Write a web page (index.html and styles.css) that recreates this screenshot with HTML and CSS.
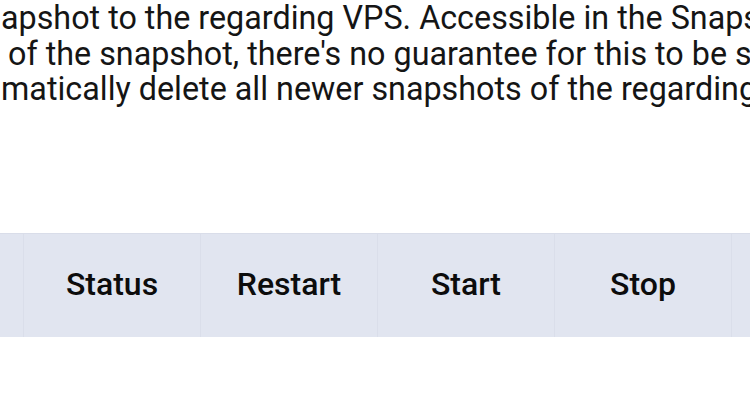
FILE: index.html
```html
<!DOCTYPE html>
<html lang="en">
<head>
  <meta charset="UTF-8">
  <title>Snapshots</title>
  <link rel="stylesheet" href="styles.css">
</head>
<body>
  <div class="intro">
    <p class="intro-line first">apshot to the regarding VPS. Accessible in the Snapshot list.</p>
    <p class="intro-line second">of the snapshot, there's no guarantee for this to be successful.</p>
    <p class="intro-line third">matically delete all newer snapshots of the regarding VPS.</p>
  </div>

  <div class="tabela-wrapper">
    <table class="acoes">
      <thead>
        <tr>
          <th>Name</th>
          <th>Status</th>
          <th>Restart</th>
          <th>Start</th>
          <th>Stop</th>
          <th>Delete</th>
        </tr>
      </thead>
    </table>
  </div>
</body>
</html>
```

FILE: styles.css
```css
* {
  box-sizing: border-box;
}

body {
  margin: 0;
  overflow: hidden;
  font-family: Roboto, 'Liberation Sans', sans-serif;
  background: #ffffff;
  color: #151515;
}

.intro {
  overflow: hidden;
  padding-top: 1px;
}

.intro-line {
  margin: 0;
  white-space: nowrap;
  font-size: 32.3px;
  line-height: 35.5px;
  padding-left: 1px;
}

.intro-line.second {
  padding-left: 8px;
}

.tabela-wrapper {
  margin-top: 125px;
  overflow: hidden;
}

table.acoes {
  width: 1062px;
  border-collapse: collapse;
  margin-left: -154px;
  table-layout: fixed;
}

.acoes th {
  width: 177px;
  height: 104px;
  padding: 0 0 3px;
  background: #e1e5f0;
  border-top: 1px solid #d9dde9;
  border-left: 1px solid #dadeea;
  color: #0c0c0c;
  font-size: 32px;
  font-weight: 500;
  text-align: center;
}
```
